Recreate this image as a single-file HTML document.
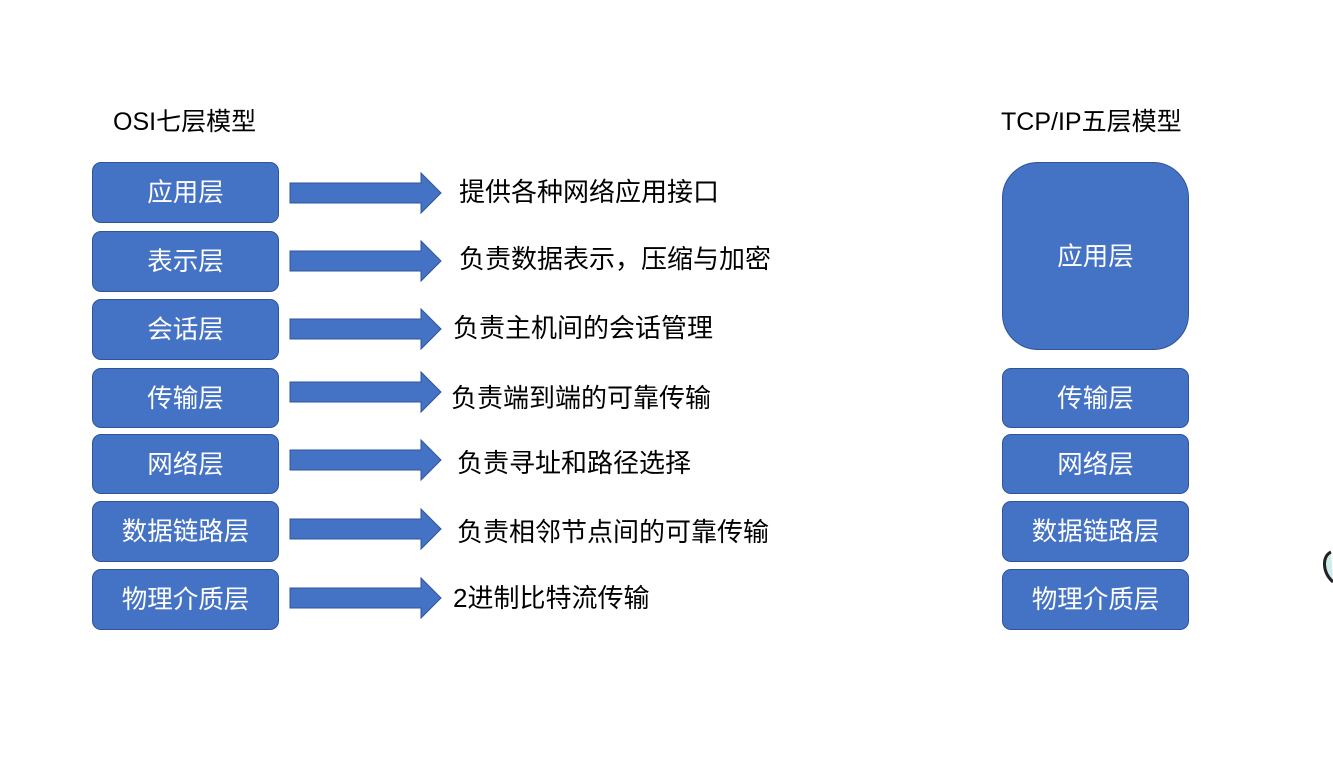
<!DOCTYPE html><html><head><meta charset="utf-8"><style>
body{margin:0;width:1333px;height:771px;background:#fff;position:relative;overflow:hidden;font-family:"Liberation Sans","Noto Sans CJK SC",sans-serif}
.b{position:absolute;box-sizing:border-box;background:#4472C4;border:1.5px solid #2F5597;border-radius:9px;color:#fff;font-size:25.5px;display:flex;align-items:center;justify-content:center;width:187px;padding-bottom:4px}
.t{position:absolute;font-size:26px;color:#000;line-height:30px}
.h{font-size:25px}
svg{position:absolute}
</style></head><body>
<div class="t h" style="left:113px;top:107px">OSI七层模型</div>
<div class="t h" style="left:1001px;top:107px">TCP/IP五层模型</div>

<div class="b" style="left:92px;top:162px;height:61px">应用层</div>
<div class="b" style="left:92px;top:231px;height:61px">表示层</div>
<div class="b" style="left:92px;top:299px;height:61px">会话层</div>
<div class="b" style="left:92px;top:368px;height:60px">传输层</div>
<div class="b" style="left:92px;top:434px;height:60px">网络层</div>
<div class="b" style="left:92px;top:501px;height:61px">数据链路层</div>
<div class="b" style="left:92px;top:569px;height:61px">物理介质层</div>

<svg width="1333" height="771" style="left:0;top:0">
<g fill="#4472C4" stroke="#2F5597" stroke-width="1">
<polygon points="290,183 421,183 421,173 441,193 421,213 421,203 290,203"/>
<polygon points="290,251 421,251 421,241 441,261 421,281 421,271 290,271"/>
<polygon points="290,319 421,319 421,309 441,329 421,349 421,339 290,339"/>
<polygon points="290,382 421,382 421,372 441,392 421,412 421,402 290,402"/>
<polygon points="290,450 421,450 421,440 441,460 421,480 421,470 290,470"/>
<polygon points="290,519 421,519 421,509 441,529 421,549 421,539 290,539"/>
<polygon points="290,588 421,588 421,578 441,598 421,618 421,608 290,608"/>
</g>
<path d="M1331,552 C1322,556 1322,572 1333,582" fill="#cdeceb" stroke="#222" stroke-width="3"/>
</svg>

<div class="t" style="left:459px;top:177px">提供各种网络应用接口</div>
<div class="t" style="left:459px;top:244px">负责数据表示，压缩与加密</div>
<div class="t" style="left:453px;top:313px">负责主机间的会话管理</div>
<div class="t" style="left:451px;top:383px">负责端到端的可靠传输</div>
<div class="t" style="left:457px;top:448px">负责寻址和路径选择</div>
<div class="t" style="left:457px;top:517px">负责相邻节点间的可靠传输</div>
<div class="t" style="left:453px;top:583px">2进制比特流传输</div>

<div class="b" style="left:1002px;top:162px;height:188px;border-radius:36px">应用层</div>
<div class="b" style="left:1002px;top:368px;height:60px">传输层</div>
<div class="b" style="left:1002px;top:434px;height:60px">网络层</div>
<div class="b" style="left:1002px;top:501px;height:61px">数据链路层</div>
<div class="b" style="left:1002px;top:569px;height:61px">物理介质层</div>
</body></html>
